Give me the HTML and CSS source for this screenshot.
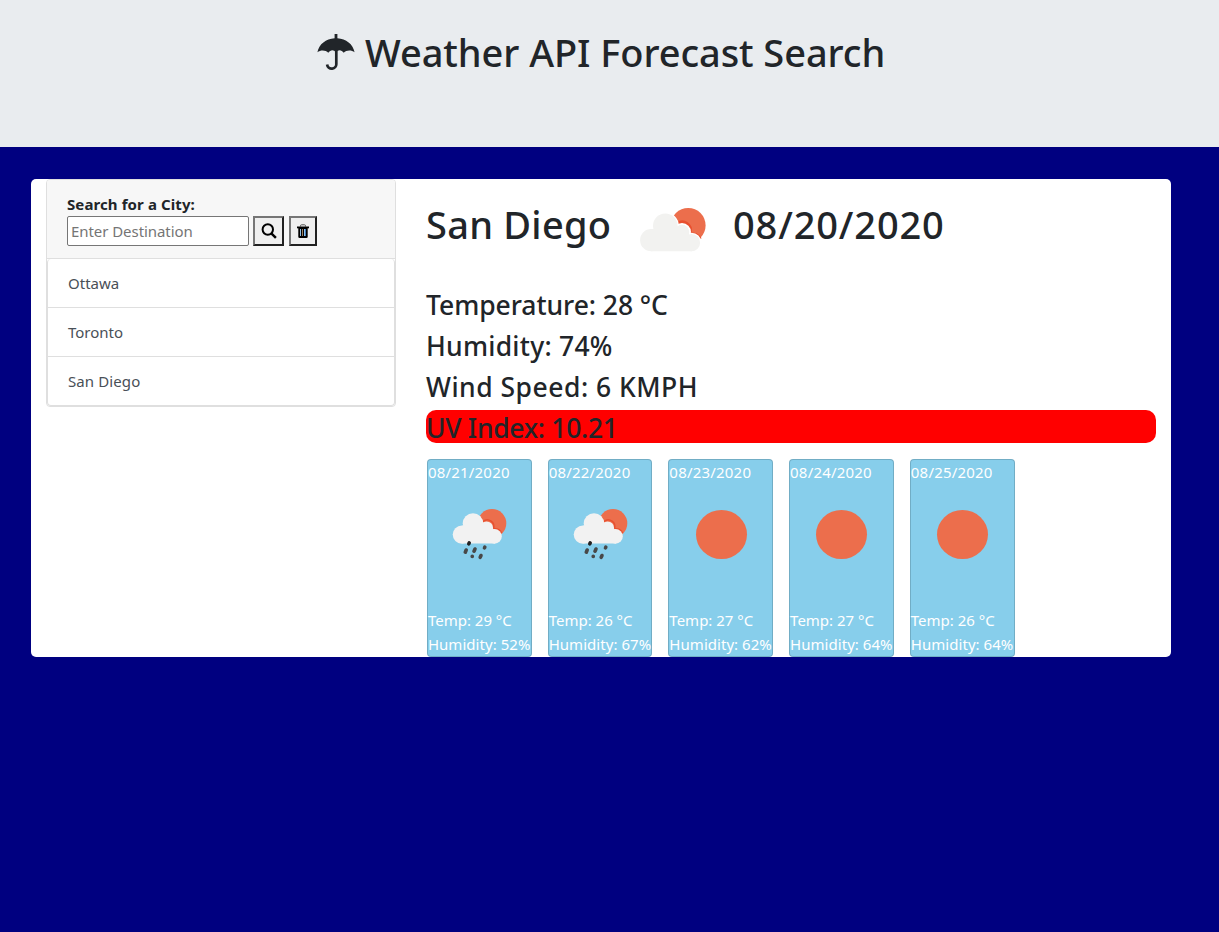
FILE: index.html
```html
<!DOCTYPE html>
<html lang="en">
<head>
<meta charset="utf-8">
<title>Weather API Forecast Search</title>
<link rel="stylesheet" href="styles.css">
</head>
<body>
<svg class="defs" width="0" height="0" aria-hidden="true">
  <defs>
    <symbol id="cloud-sun" viewBox="0 0 66 44">
      <circle cx="48.200" cy="17.400" r="17.400" fill="#ec6e4c"/>
      <g fill="none" stroke="#e8502f" stroke-width="3.600"><path d="M38 15.500a8 8 0 0 1 12 8.500v2.500a8.700 8.700 0 0 1 10 4.500"/></g>
      <g fill="#f2f2f0" stroke="#fff" stroke-width="2"><circle cx="25.300" cy="17.800" r="12.500"/><circle cx="42" cy="24" r="8"/><circle cx="51.500" cy="34.500" r="8.800"/></g>
      <g fill="#f2f2f0"><circle cx="25.300" cy="17.800" r="12.300"/><circle cx="42" cy="24" r="7.200"/><circle cx="51.500" cy="34.700" r="8.600"/><circle cx="11.200" cy="32.200" r="11.100"/><path d="M11 21h9l22-3 10 12v13.300H11z"/></g>
    </symbol>
    <symbol id="cloud-rain" viewBox="0 0 55 51">
      <circle cx="40" cy="14.300" r="14.300" fill="#ec6e4c"/>
      <path d="M31 12.500a6.500 6.500 0 0 1 10.200 7.500a7.500 7.500 0 0 1 8.300 4" fill="none" stroke="#e8502f" stroke-width="1.500"/>
      <g fill="#f2f2f2"><circle cx="21" cy="14.600" r="10.300"/><circle cx="34.500" cy="19" r="6.600"/><circle cx="42.500" cy="27.400" r="7.300"/><circle cx="9.800" cy="25.600" r="9.100"/><path d="M10 16.600h8l16-3 9 8v13H10z"/></g>
      <g stroke="#484848" stroke-width="3.600" stroke-linecap="round">
        <path d="M17.200 33.900l-.4.900" stroke="#222"/><path d="M14.200 41l-.9 2.200M23 40l-1 2.200M32.800 38.200l-.3.700M20.200 47.400h.1M29 46.500l-.8 1.800"/>
      </g>
    </symbol>
  </defs>
</svg>
<header class="banner">
  <svg class="umbrella" viewBox="0 0 38 36" aria-hidden="true">
    <path d="M17.600 0h2.800v4.200C29 4.700 36 10 37.600 18.300C34.500 15.900 29.500 15.800 26.700 18.800C24.500 15.800 21.500 14.900 19 18.600C16.500 14.900 13.500 15.800 11.300 18.800C8.500 15.800 3.500 15.900.4 18.300C2 10 9 4.700 17.600 4.200z" fill="#212529"/>
    <path d="M19.300 16v13.500a4.600 4.600 0 0 1-9.200 1" fill="none" stroke="#212529" stroke-width="2.700"/>
  </svg>
  <h1 class="title">Weather API Forecast Search</h1>
</header>
<main class="panel">
  <aside class="search-card">
    <div class="search-head">
      <label class="search-label" for="city">Search for a City:</label>
      <div class="search-row">
        <input class="search-input" id="city" placeholder="Enter Destination">
        <button class="btn btn-search" aria-label="Search"><svg width="16" height="16" viewBox="0 0 16 16" fill="none" stroke="#000"><circle cx="6.800" cy="6.500" r="5.200" stroke-width="2"/><path d="M10.300 10.300l4.600 4.600" stroke-width="2.400"/></svg></button>
        <button class="btn btn-clear" aria-label="Clear"><svg width="12" height="14" viewBox="0 0 12 14"><path d="M3.500 2.500V1.800a1 1 0 0 1 1-1h3a1 1 0 0 1 1 1v.7" fill="none" stroke="#555"/><path d="M0 2.500h12v1.800H0z"/><path d="M1.300 4h9.400v8.700a1.300 1.300 0 0 1-1.300 1.300H2.600a1.300 1.300 0 0 1-1.300-1.300z"/><path d="M3.500 5v7M7.500 5v7" stroke="#8fc0e8"/><path d="M5.500 5v7" stroke="#a08060"/><path d="M8.500 5v7" stroke="#3a78b8"/></svg></button>
      </div>
    </div>
    <ul class="cities">
      <li class="city">Ottawa</li>
      <li class="city">Toronto</li>
      <li class="city">San Diego</li>
    </ul>
  </aside>
  <section class="weather">
    <div class="current">
      <h1 class="place">San Diego</h1>
      <svg class="current-icon"><use href="#cloud-sun"/></svg>
      <h1 class="date">08/20/2020</h1>
    </div>
    <h3 class="stat temp">Temperature: 28 °C</h3>
    <h3 class="stat hum">Humidity: 74%</h3>
    <h3 class="stat wind">Wind Speed: 6 KMPH</h3>
    <h3 class="stat uv">UV Index: 10.21</h3>
    <div class="forecast">
      <div class="day"><p class="day-date">08/21/2020</p><svg class="day-icon"><use href="#cloud-rain"/></svg><p class="day-temp">Temp: 29 °C</p><p class="day-hum">Humidity: 52%</p></div>
      <div class="day"><p class="day-date">08/22/2020</p><svg class="day-icon"><use href="#cloud-rain"/></svg><p class="day-temp">Temp: 26 °C</p><p class="day-hum">Humidity: 67%</p></div>
      <div class="day"><p class="day-date">08/23/2020</p><span class="sun"></span><p class="day-temp">Temp: 27 °C</p><p class="day-hum">Humidity: 62%</p></div>
      <div class="day"><p class="day-date">08/24/2020</p><span class="sun"></span><p class="day-temp">Temp: 27 °C</p><p class="day-hum">Humidity: 64%</p></div>
      <div class="day"><p class="day-date">08/25/2020</p><span class="sun"></span><p class="day-temp">Temp: 26 °C</p><p class="day-hum">Humidity: 64%</p></div>
    </div>
  </section>
</main>
</body>
</html>
```
FILE: styles.css
```css
* { box-sizing: border-box; }
html { height: 100%; }
body { margin: 0; min-height: 100%; background: #000080; color: #212529; font: 400 15px/24px "Noto Sans", "Open Sans", sans-serif; }
h1, h3, p, ul { margin: 0; padding: 0; }
h1, h3 { font-weight: 500; white-space: nowrap; }
.defs { display: block; height: 0; }
.banner { height: 147px; background: #e9ecef; display: flex; align-items: flex-start; padding: 28px 0 0 317px; }
.umbrella { width: 38px; height: 36px; margin: 6px 10px 0 0; flex: none; }
.title, .place, .date { font-size: 38px; line-height: 48px; }
.title { letter-spacing: -.07px; }
.panel { width: 1140px; height: 478px; margin: 32px 0 0 31px; background: #fff; border-radius: 5px; display: flex; padding: 0 15px; gap: 30px; align-items: flex-start; }
.search-card { width: 350px; height: 228px; border: 1px solid #dfdfdf; border-radius: 4px; flex: none; }
.search-head { height: 79px; background: #f7f7f7; border-bottom: 1px solid #dfdfdf; border-radius: 3px 3px 0 0; padding: 12px 20px; }
.search-label { display: block; font-weight: 700; font-size: 15px; letter-spacing: .1px; white-space: nowrap; }
.search-row { display: flex; gap: 4px; }
.search-input { width: 182px; height: 30px; border: 1px solid #767676; border-radius: 2px; padding: 1px 3px; font: 400 15px "Noto Sans", sans-serif; letter-spacing: -.06px; background: #fff; }
.search-input::placeholder { color: #757575; }
.btn { height: 30px; padding: 0; background: #efefef; border: 2px solid; border-color: #767676 #212121 #212121 #767676; display: flex; align-items: center; justify-content: center; }
.btn-search { width: 31px; }
.btn-clear { width: 28px; margin-left: 1px; }
.cities { list-style: none; border: 1px solid #dfdfdf; border-top: 0; border-radius: 4px; }
.city { height: 49px; padding: 12px 20px; color: #495057; border-bottom: 1px solid #dfdfdf; }
.city:last-child { border-bottom: 0; height: 48px; letter-spacing: .1px; }
.weather { width: 730px; flex: none; }
.current { height: 108px; padding-top: 21px; display: flex; align-items: flex-start; }
.place { width: 214px; letter-spacing: .25px; }
.date { letter-spacing: .85px; }
.current-icon { width: 66px; height: 44px; margin: 8px 27px 0 0; }
.stat { font-size: 26.500px; height: 33px; line-height: 37px; margin-bottom: 8px; }
.temp { letter-spacing: -.06px; }
.hum { letter-spacing: .25px; }
.wind { letter-spacing: .5px; }
.uv { background: red; border-radius: 10px; margin-bottom: 16px; letter-spacing: -.3px; }
.forecast { display: flex; gap: 15.900px; padding-left: .9px; }
.day { width: 104.850px; height: 198px; margin-right: 0; background: skyblue; color: #fff; border: 1px solid rgba(0,0,0,.16); border-radius: 4px; display: flex; flex-direction: column; white-space: nowrap; }
.day:nth-child(2) { width: 104.500px; margin-right: .350px; }
.day-date { height: 49px; letter-spacing: .2px; }
.day-hum { letter-spacing: .04px; }
.day-icon { width: 55px; height: 51px; margin: 0 0 48px 24.500px; }
.sun { width: 51px; height: 49px; border-radius: 50%; background: #ec6e4c; margin: 1px 0 49px 26.300px; }
```
